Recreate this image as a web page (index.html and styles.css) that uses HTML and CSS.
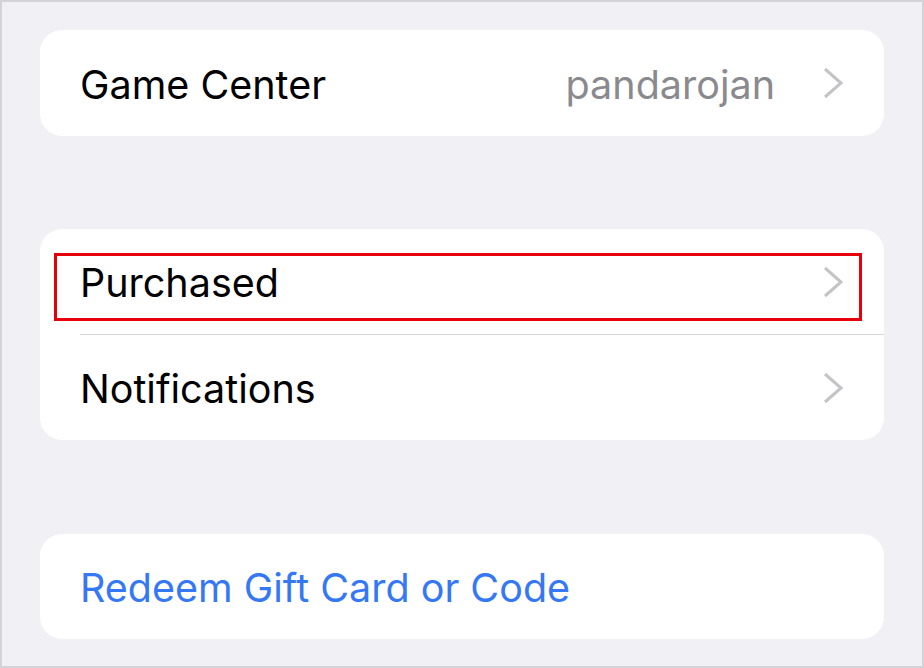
FILE: index.html
```html
<!DOCTYPE html>
<html lang="en">

<head>
    <meta charset="UTF-8">
    <meta name="viewport" content="width=device-width, initial-scale=1.0">
    <title>Account</title>
    <link rel="stylesheet" href="styles.css">
</head>

<body>
    <div class="frame">

        <div class="group">
            <div class="row">
                <span class="label">Game Center</span>
                <span class="value">pandarojan</span>
                <svg class="chevron" viewBox="0 0 20 32"><path d="M2 2 L18 16 L2 30" /></svg>
            </div>
        </div>

        <div class="group highlighted">
            <div class="row">
                <span class="label">Purchased</span>
                <svg class="chevron" viewBox="0 0 20 32"><path d="M2 2 L18 16 L2 30" /></svg>
            </div>
            <div class="separator"></div>
            <div class="row">
                <span class="label">Notifications</span>
                <svg class="chevron" viewBox="0 0 20 32"><path d="M2 2 L18 16 L2 30" /></svg>
            </div>
            <!-- annotation box -->
            <div class="marker"></div>
        </div>

        <div class="group last">
            <div class="row">
                <span class="label link">Redeem Gift Card or Code</span>
            </div>
        </div>

    </div>
</body>

</html>
```

FILE: styles.css
```css
html,
body {
    margin: 0;
    padding: 0;
}

body {
    font-family: "Inter", "Liberation Sans", sans-serif;
    background: #f0f0f5;
}

.frame {
    box-sizing: border-box;
    width: 924px;
    height: 668px;
    border: 2px solid #d3d3d8;
    background: #f0f0f5;
    padding: 28px 38px 0 38px;
    display: flex;
    flex-direction: column;
    gap: 93px;
}

.group {
    position: relative;
    background: #ffffff;
    border-radius: 22px;
}

.group.last {
    margin-top: 1px;
}

.row {
    box-sizing: border-box;
    height: 105px;
    display: flex;
    align-items: center;
    padding: 3px 41px 0 40px;
}

.group:first-child .row {
    height: 106px;
}

.label {
    flex: 1;
    font-size: 39.5px;
    color: #000000;
}

.link {
    color: #3478f6;
}

.value {
    font-size: 39.5px;
    color: #8a8a8e;
    margin-right: 48px;
}

.chevron {
    width: 20px;
    height: 32px;
    margin-bottom: 3px;
    fill: none;
    stroke: #c4c4c7;
    stroke-width: 3;
}

.separator {
    height: 1px;
    margin-left: 40px;
    background: #d6d6da;
}

/* red annotation */
.marker {
    position: absolute;
    left: 14px;
    top: 24px;
    width: 808px;
    height: 68px;
    box-sizing: border-box;
    border: 3.5px solid #e6000c;
}
```
